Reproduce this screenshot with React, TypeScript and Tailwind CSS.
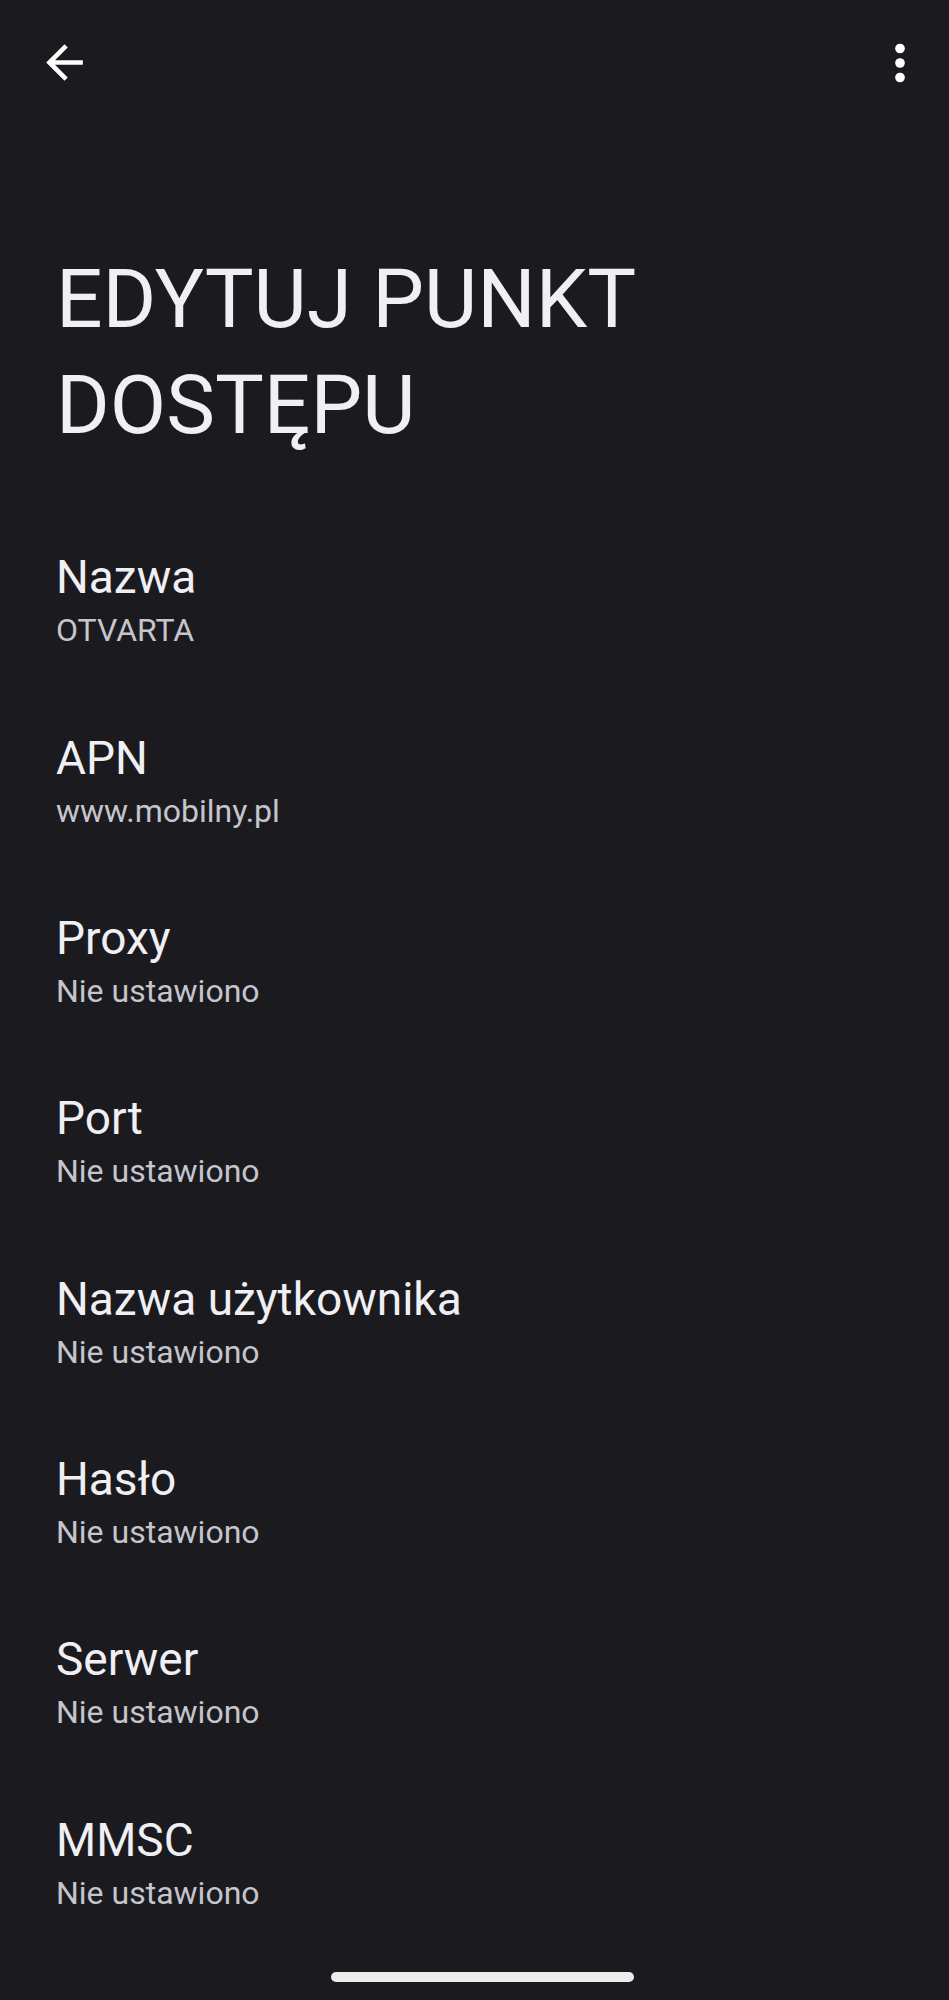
const fields = [
  { label: 'Nazwa', value: 'OTVARTA' },
  { label: 'APN', value: 'www.mobilny.pl' },
  { label: 'Proxy', value: 'Nie ustawiono' },
  { label: 'Port', value: 'Nie ustawiono' },
  { label: 'Nazwa użytkownika', value: 'Nie ustawiono' },
  { label: 'Hasło', value: 'Nie ustawiono' },
  { label: 'Serwer', value: 'Nie ustawiono' },
  { label: 'MMSC', value: 'Nie ustawiono' },
]

function BackIcon() {
  return (
    <svg viewBox="0 0 24 24" className="h-[55px] w-[55px]" fill="#ffffff">
      <path d="M20 11H7.83l5.59-5.59L12 4l-8 8 8 8 1.41-1.41L7.83 13H20v-2z" />
    </svg>
  )
}

function MoreIcon() {
  return (
    <svg viewBox="0 0 24 24" className="h-[58px] w-[58px]" fill="#ffffff">
      <circle cx="12" cy="6" r="2" />
      <circle cx="12" cy="12" r="2" />
      <circle cx="12" cy="18" r="2" />
    </svg>
  )
}

export default function App() {
  return (
    <div
      className="flex h-[2000px] w-full flex-col overflow-hidden bg-[#1b1b1f]"
      style={{ fontFamily: 'Roboto, "Noto Sans", sans-serif' }}
    >
      {/* top app bar */}
      <div className="flex h-[125px] items-start justify-between pl-[37px] pr-[20px] pt-[35px]">
        <button className="flex items-center justify-center">
          <BackIcon />
        </button>
        <button className="-mt-[1px] flex items-center justify-center">
          <MoreIcon />
        </button>
      </div>

      <h1 className="mt-[121px] px-[56px] text-[82px] font-normal leading-[106px] text-[#efeff4]">
        EDYTUJ PUNKT DOSTĘPU
      </h1>

      <div className="mt-[56px] flex flex-col">
        {fields.map((f) => (
          <div key={f.label} className="px-[56px] py-[37.2px]">
            <p className="text-[46px] leading-[52px] text-[#efeff4]">{f.label}</p>
            <p className="text-[32px] leading-[54px] text-[#c5c5cd]">{f.value}</p>
          </div>
        ))}
      </div>

      <div className="mt-auto mb-[18px] ml-[331px] h-[10px] w-[303px] rounded-full bg-[#ececec]" />
    </div>
  )
}
